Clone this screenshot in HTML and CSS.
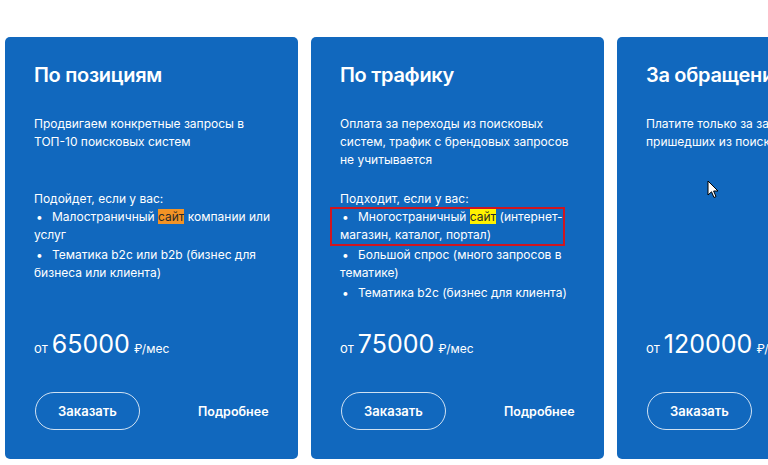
FILE: index.html
```html
<!doctype html>
<html lang="ru">
<head>
    <meta charset="UTF-8">
    <meta name="viewport" content="width=device-width, initial-scale=1.0">
    <title>Тарифы продвижения</title>
    <link rel="stylesheet" href="styles.css">
</head>
<body>
    <div class="tariffs">
        <div class="card">
            <h2 class="card-title">По позициям</h2>
            <p class="card-desc">Продвигаем конкретные запросы в<br>ТОП-10 поисковых систем</p>
            <p class="card-lead">Подойдет, если у вас:</p>
            <ul class="card-list">
                <li>Малостраничный <span class="hl hl-orange">сайт</span> компании или<br>услуг</li>
                <li>Тематика b2c или b2b (бизнес для<br>бизнеса или клиента)</li>
            </ul>
            <div class="price"><span class="price-from">от</span> <span class="price-num">65000</span> <span class="price-unit">₽/мес</span></div>
            <div class="actions">
                <button class="btn-order" type="button">Заказать</button>
                <a class="more" href="#">Подробнее</a>
            </div>
        </div>

        <div class="card">
            <h2 class="card-title">По трафику</h2>
            <p class="card-desc">Оплата за переходы из поисковых<br>систем, трафик с брендовых запросов<br>не учитывается</p>
            <p class="card-lead">Подходит, если у вас:</p>
            <ul class="card-list">
                <li class="marked">Многостраничный <span class="hl hl-yellow">сайт</span> (интернет-<br>магазин, каталог, портал)</li>
                <li>Большой спрос (много запросов в<br>тематике)</li>
                <li>Тематика b2c (бизнес для клиента)</li>
            </ul>
            <div class="price"><span class="price-from">от</span> <span class="price-num">75000</span> <span class="price-unit">₽/мес</span></div>
            <div class="actions">
                <button class="btn-order" type="button">Заказать</button>
                <a class="more" href="#">Подробнее</a>
            </div>
        </div>

        <div class="card">
            <h2 class="card-title">За обращения</h2>
            <p class="card-desc">Платите только за заявки клиентов,<br>пришедших из поисковых систем</p>
            <p class="card-lead">&nbsp;</p>
            <div class="price"><span class="price-from">от</span> <span class="price-num">120000</span> <span class="price-unit">₽/мес</span></div>
            <div class="actions">
                <button class="btn-order" type="button">Заказать</button>
                <a class="more" href="#">Подробнее</a>
            </div>
        </div>
    </div>

    <svg class="cursor" width="12" height="19" viewBox="0 0 12 19">
        <path d="M1 1 L1 15 L4.5 11.8 L7 17.5 L9 16.6 L6.6 11 L11 11 Z" fill="#fff" stroke="#000" stroke-width="1" stroke-linejoin="round"/>
    </svg>
</body>
</html>
```

FILE: styles.css
```css
body {
    margin: 0;
    background: #fff;
    font-family: Inter, "Noto Sans", sans-serif;
    overflow: hidden;
}
.tariffs {
    display: flex;
    gap: 13px;
    padding: 37px 0 0 5px;
    width: 1000px;
}
.card {
    display: flex;
    flex-direction: column;
    box-sizing: border-box;
    width: 293px;
    height: 422px;
    padding: 25px 20px 29px 29px;
    background: #1168be;
    border-radius: 5px;
    color: #fff;
    flex-shrink: 0;
}
.card-title {
    margin: 0;
    font-size: 20px;
    line-height: 26px;
    font-weight: 600;
    letter-spacing: -0.3px;
}
.card-desc {
    margin: 27px 0 0;
    height: 54px;
    font-size: 12px;
    line-height: 18px;
    white-space: nowrap;
}
.card-lead {
    margin: 21px 0 0;
    font-size: 12px;
    line-height: 18px;
}
.card-list {
    margin: 0;
    padding: 0;
    list-style: none;
    font-size: 12px;
    line-height: 18px;
    white-space: nowrap;
}
.card-list li {
    margin-bottom: 2px;
}
.card-list li::before {
    content: "•";
    display: inline-block;
    width: 16px;
    padding-left: 2px;
}
.card-list li.marked {
    position: relative;
}
.card-list li.marked::after {
    content: "";
    position: absolute;
    left: -10px;
    right: 19px;
    top: -1px;
    bottom: -2px;
    border: 2px solid #d0151f;
}
.hl {
    color: #2a2a2a;
}
.hl-orange {
    background: #f39325;
}
.hl-yellow {
    background: #fff200;
}
.price {
    margin-top: auto;
    display: flex;
    align-items: baseline;
    gap: 4px;
    line-height: 30px;
}
.price-from {
    font-size: 13px;
}
.price-num {
    font-size: 25px;
    font-weight: 400;
}
.price-unit {
    font-size: 12px;
}
.actions {
    display: flex;
    align-items: center;
    margin-top: 28px;
}
.btn-order {
    width: 105px;
    height: 38px;
    margin-left: 1px;
    border: 1px solid rgba(255, 255, 255, 0.8);
    border-radius: 19px;
    background: transparent;
    color: #fff;
    font-family: inherit;
    font-size: 13px;
    font-weight: 600;
    cursor: pointer;
}
.more {
    margin-left: 58px;
    color: #fff;
    font-size: 12.5px;
    font-weight: 600;
    text-decoration: none;
}
.cursor {
    position: absolute;
    left: 707px;
    top: 180px;
}
```
